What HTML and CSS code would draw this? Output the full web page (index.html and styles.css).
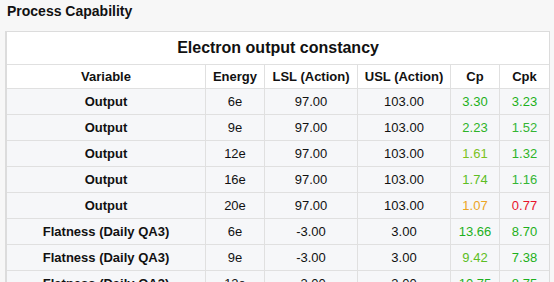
FILE: index.html
```html
<!DOCTYPE html>
<html>
<head>
<meta charset="utf-8">
<link rel="stylesheet" href="styles.css">
</head>
<body>
<div class="page">
  <h2 class="heading">Process Capability</h2>
  <div class="panel">
    <table class="cap-table">
      <colgroup>
        <col class="w-var"><col class="w-energy"><col class="w-lsl"><col class="w-usl"><col class="w-cp"><col class="w-cpk">
      </colgroup>
      <thead>
        <tr class="title-row"><th colspan="6">Electron output constancy</th></tr>
        <tr class="head-row"><th>Variable</th><th>Energy</th><th>LSL (Action)</th><th>USL (Action)</th><th>Cp</th><th>Cpk</th></tr>
      </thead>
      <tbody>
        <tr><th>Output</th><td>6e</td><td>97.00</td><td>103.00</td><td class="g1">3.30</td><td class="g1">3.23</td></tr>
        <tr><th>Output</th><td>9e</td><td>97.00</td><td>103.00</td><td class="g2">2.23</td><td class="g3">1.52</td></tr>
        <tr><th>Output</th><td>12e</td><td>97.00</td><td>103.00</td><td class="g5">1.61</td><td class="g2">1.32</td></tr>
        <tr><th>Output</th><td>16e</td><td>97.00</td><td>103.00</td><td class="g4">1.74</td><td class="g3">1.16</td></tr>
        <tr><th>Output</th><td>20e</td><td>97.00</td><td>103.00</td><td class="warn">1.07</td><td class="bad">0.77</td></tr>
        <tr><th>Flatness (Daily QA3)</th><td>6e</td><td>-3.00</td><td>3.00</td><td class="g1">13.66</td><td class="g1">8.70</td></tr>
        <tr><th>Flatness (Daily QA3)</th><td>9e</td><td>-3.00</td><td>3.00</td><td class="g4">9.42</td><td class="g1">7.38</td></tr>
        <tr><th>Flatness (Daily QA3)</th><td>12e</td><td>-3.00</td><td>3.00</td><td class="g1">10.75</td><td class="g1">8.75</td></tr>
      </tbody>
    </table>
  </div>
</div>
</body>
</html>
```

FILE: styles.css
```css
html, body {
  margin: 0;
  padding: 0;
  background: #f7f7f7;
  overflow: hidden;
}
.page {
  padding-top: 3px;
  font-family: "Liberation Sans", Arial, sans-serif;
  color: #111;
}
.heading {
  margin: 0 0 12px 7px;
  font-size: 14px;
  line-height: 16px;
  font-weight: bold;
}
.panel {
  margin-left: 5px;
  width: 542px;
  border: 1px solid #dcdcdc;
  border-left: 2px solid #dcdcdc;
  background: #fff;
}
.cap-table {
  width: 542px;
  table-layout: fixed;
  border-collapse: separate;
  border-spacing: 0;
  font-size: 13px;
}
.w-var { width: 199px; }
.w-energy { width: 59px; }
.w-lsl { width: 93px; }
.w-usl { width: 93px; }
.w-cp { width: 49px; }
.w-cpk { width: 49px; }
.cap-table th,
.cap-table td {
  padding: 0;
  text-align: center;
  border-right: 1px solid #e0e0e0;
  border-bottom: 1px solid #e0e0e0;
  box-sizing: border-box;
  white-space: nowrap;
}
.cap-table th:last-child,
.cap-table td:last-child {
  border-right: none;
}
.title-row th {
  height: 33px;
  font-size: 16px;
}
.head-row th {
  height: 24px;
}
tbody tr {
  background: #f6f7f9;
}
tbody th,
tbody td {
  height: 26px;
}
.g1 { color: #1db020; }
.g2 { color: #2eb428; }
.g3 { color: #34b534; }
.g4 { color: #5cbe24; }
.g5 { color: #7cc21e; }
.warn { color: #eca524; }
.bad { color: #e8142c; }
```
